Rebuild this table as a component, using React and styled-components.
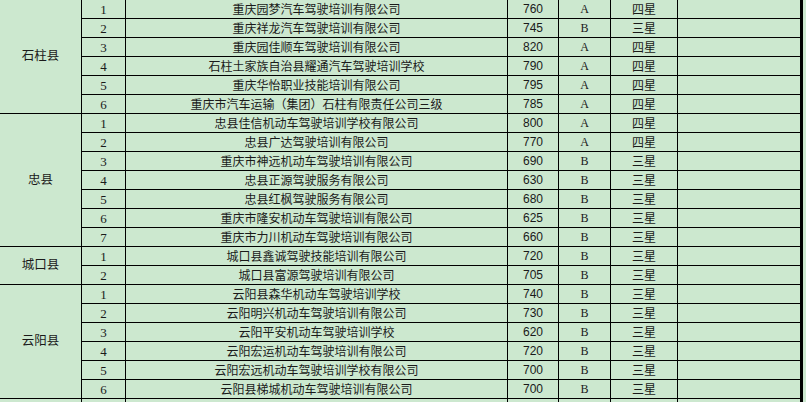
import React from "react"
import styled, { createGlobalStyle } from "styled-components"

const GlobalStyle = createGlobalStyle`
  html, body {
    margin: 0;
    padding: 0;
    background: #cce8cf;
    overflow: hidden;
  }
  body {
    font-family: "Noto Sans CJK SC", "Liberation Sans", sans-serif;
    color: #1a1a1a;
  }
`

const Sheet = styled.div`
  display: grid;
  grid-template-columns: 82px 44px 382px 51px 52px 67px 125px;
  grid-auto-rows: 19px;
  width: 803px;
  background: #cce8cf;
`

const Cell = styled.div`
  box-sizing: border-box;
  display: flex;
  align-items: center;
  justify-content: center;
  border-right: 1px solid #000;
  border-bottom: 1px solid #000;
  font-size: 12px;
  line-height: 1;
  white-space: nowrap;
  overflow: hidden;
`

const District = styled(Cell)`
  grid-row: span ${(p) => p.$span};
  font-size: 12.5px;
  padding-bottom: 2px;
`

const Index = styled(Cell)`
  font-family: "Liberation Serif", "DejaVu Serif", serif;
  font-size: 13px;
`

const Name = styled(Cell)``

const Score = styled(Cell)`
  font-family: "Liberation Sans", Arial, sans-serif;
`

const Grade = styled(Cell)`
  font-family: "Liberation Serif", "DejaVu Serif", serif;
`

const Star = styled(Cell)`
  font-size: 12px;
`

const Blank = styled(Cell)`
  border-right-width: 3px;
`

const groups = [
  {
    name: "石柱县",
    rows: [
      ["重庆园梦汽车驾驶培训有限公司", "760", "A", "四星"],
      ["重庆祥龙汽车驾驶培训有限公司", "745", "B", "三星"],
      ["重庆园佳顺车驾驶培训有限公司", "820", "A", "四星"],
      ["石柱土家族自治县耀通汽车驾驶培训学校", "790", "A", "四星"],
      ["重庆华怡职业技能培训有限公司", "795", "A", "四星"],
      ["重庆市汽车运输（集团）石柱有限责任公司三级", "785", "A", "四星"],
    ],
  },
  {
    name: "忠县",
    rows: [
      ["忠县佳信机动车驾驶培训学校有限公司", "800", "A", "四星"],
      ["忠县广达驾驶培训有限公司", "770", "A", "四星"],
      ["重庆市神远机动车驾驶培训有限公司", "690", "B", "三星"],
      ["忠县正源驾驶服务有限公司", "630", "B", "三星"],
      ["忠县红枫驾驶服务有限公司", "680", "B", "三星"],
      ["重庆市隆安机动车驾驶培训有限公司", "625", "B", "三星"],
      ["重庆市力川机动车驾驶培训有限公司", "660", "B", "三星"],
    ],
  },
  {
    name: "城口县",
    rows: [
      ["城口县鑫诚驾驶技能培训有限公司", "720", "B", "三星"],
      ["城口县富源驾驶培训有限公司", "705", "B", "三星"],
    ],
  },
  {
    name: "云阳县",
    rows: [
      ["云阳县森华机动车驾驶培训学校", "740", "B", "三星"],
      ["云阳明兴机动车驾驶培训有限公司", "730", "B", "三星"],
      ["云阳平安机动车驾驶培训学校", "620", "B", "三星"],
      ["云阳宏运机动车驾驶培训有限公司", "720", "B", "三星"],
      ["云阳宏远机动车驾驶培训学校有限公司", "700", "B", "三星"],
      ["云阳县梯城机动车驾驶培训有限公司", "700", "B", "三星"],
    ],
  },
  {
    // next county, cut off by the bottom edge
    name: "",
    rows: [["", "", "", ""]],
    blankIndex: true,
  },
]

export default function App() {
  return (
    <>
      <GlobalStyle />
      <Sheet>
        {groups.map((g, gi) =>
          g.rows.map((r, i) => (
            <React.Fragment key={`${gi}-${i}`}>
              {i === 0 && <District $span={g.rows.length}>{g.name}</District>}
              <Index>{g.blankIndex ? "" : i + 1}</Index>
              <Name>{r[0]}</Name>
              <Score>{r[1]}</Score>
              <Grade>{r[2]}</Grade>
              <Star>{r[3]}</Star>
              <Blank />
            </React.Fragment>
          ))
        )}
      </Sheet>
    </>
  )
}
